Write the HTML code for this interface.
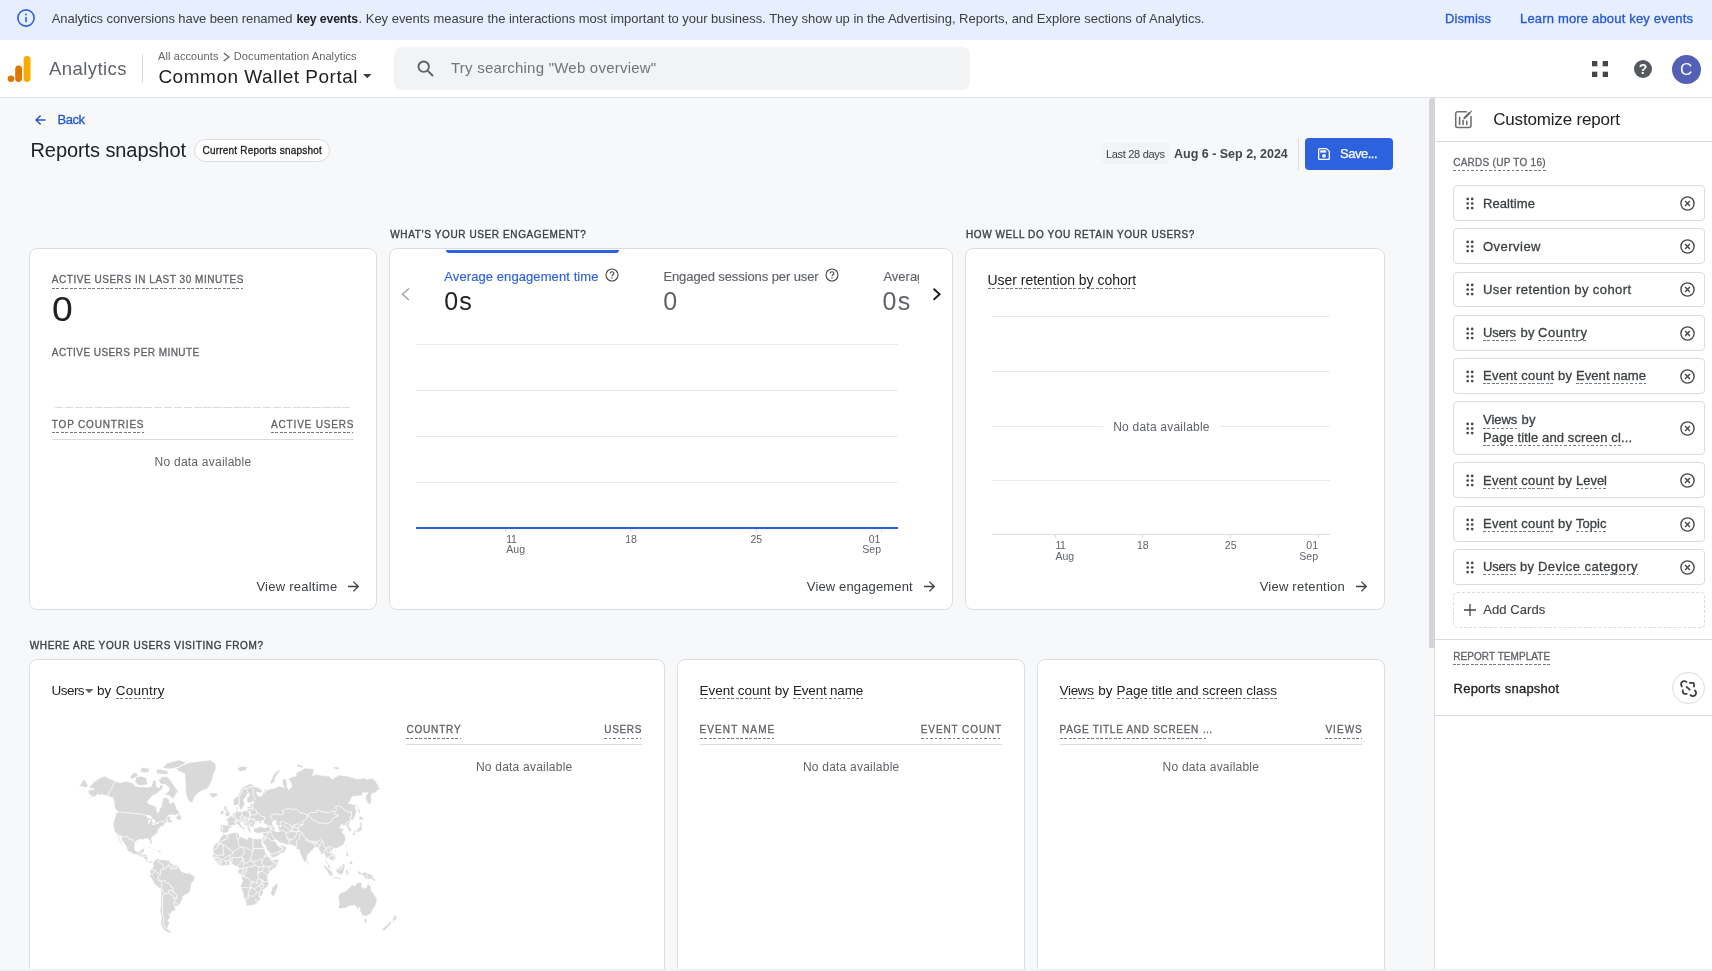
<!DOCTYPE html>
<html lang="en">
<head>
<meta charset="utf-8">
<title>Analytics | Reports snapshot</title>
<style>
*{box-sizing:border-box;margin:0;padding:0}
html,body{width:1712px;height:971px;overflow:hidden;background:#f7f8fa;font-family:"Liberation Sans",Arial,sans-serif;color:#202124}
.abs{position:absolute}
.t{position:absolute;white-space:nowrap;line-height:1}
.card{position:absolute;background:#fff;border:1px solid #dadce0;border-radius:8px}
.dash{position:absolute;height:1px;background:repeating-linear-gradient(90deg,currentColor 0,currentColor 2.7px,transparent 2.7px,transparent 4.5px)}
svg{position:absolute;overflow:visible}
</style>
</head>
<body>
<div id="root" style="position:absolute;left:0;top:0;width:1712px;height:971px;overflow:hidden;will-change:transform">
<div class="abs" style="left:0;top:0;width:1712px;height:40px;background:#e7eefd"></div>
<svg style="left:16px;top:8px" width="20" height="20" viewBox="0 0 20 20"><circle cx="10" cy="10" r="8.1" fill="none" stroke="#2c62de" stroke-width="1.6"/><rect x="9.2" y="9" width="1.6" height="5.2" fill="#2c62de"/><circle cx="10" cy="6.4" r="1" fill="#2c62de"/></svg>
<div class="t" style="left:51.8px;top:12.0px;font-size:13px;color:#3c4043;letter-spacing:-0.093px;">Analytics conversions have been renamed</div>
<div class="t" style="left:296.5px;top:13.0px;font-size:12.3px;color:#202124;letter-spacing:-0.157px;font-weight:bold;">key events</div>
<div class="t" style="left:358.6px;top:12.0px;font-size:13px;color:#3c4043;letter-spacing:-0.025px;">. Key events measure the interactions most important to your business. They show up in the Advertising, Reports, and Explore sections of Analytics.</div>
<div class="t" style="left:1445.0px;top:12.0px;font-size:13px;color:#2557d0;letter-spacing:0.084px;-webkit-text-stroke:0.3px #2557d0;">Dismiss</div>
<div class="t" style="left:1520.0px;top:12.0px;font-size:13px;color:#2557d0;letter-spacing:0.178px;-webkit-text-stroke:0.3px #2557d0;">Learn more about key events</div>
<div class="abs" style="left:0;top:40px;width:1712px;height:58px;background:#fff;border-bottom:1px solid #e1e3e6"></div>
<svg style="left:6px;top:54px" width="28" height="30" viewBox="0 0 28 30">
<circle cx="5" cy="24.7" r="3.3" fill="#e37400"/>
<rect x="9.2" y="11.5" width="6.8" height="16.5" rx="3.4" fill="#e37400"/>
<rect x="17.6" y="2" width="6.9" height="26" rx="3.4" fill="#f9ab00"/>
</svg>
<div class="t" style="left:49.0px;top:60.0px;font-size:18.5px;color:#5f6368;letter-spacing:0.434px;">Analytics</div>
<div class="abs" style="left:142.0px;top:54.0px;width:1px;height:29.0px;background:#dadce0"></div>
<div class="t" style="left:158.0px;top:51.0px;font-size:11px;color:#5f6368;letter-spacing:0.099px;">All accounts</div>
<svg style="left:222px;top:52px" width="10" height="10" viewBox="0 0 10 10"><path d="M1.8 1 L7 5 L1.8 9" fill="none" stroke="#5f6368" stroke-width="1.2"/></svg>
<div class="t" style="left:233.8px;top:51.0px;font-size:11px;color:#5f6368;letter-spacing:0.106px;">Documentation Analytics</div>
<div class="t" style="left:158.4px;top:67.0px;font-size:19px;color:#202124;letter-spacing:0.513px;">Common Wallet Portal</div>
<svg style="left:363px;top:74px" width="9" height="5" viewBox="0 0 9 5"><path d="M0 0H8.6L4.3 4.3Z" fill="#3c4043"/></svg>
<div class="abs" style="left:393.6px;top:47px;width:576px;height:43px;border-radius:8px;background:#f1f3f4"></div>
<svg style="left:416px;top:59px" width="20" height="20" viewBox="0 0 20 20"><circle cx="7.7" cy="7.7" r="5.2" fill="none" stroke="#5f6368" stroke-width="1.9"/><path d="M11.6 11.6 L17 17" stroke="#5f6368" stroke-width="2"/></svg>
<div class="t" style="left:451.0px;top:60.0px;font-size:15px;color:#70757a;letter-spacing:0.227px;">Try searching "Web overview"</div>
<svg style="left:1592px;top:61px" width="16" height="16" viewBox="0 0 16 16"><rect x="0" y="0" width="5.3" height="5.3" fill="#444746"/><rect x="10.7" y="0" width="5.3" height="5.3" fill="#444746"/><rect x="0" y="10.7" width="5.3" height="5.3" fill="#444746"/><rect x="10.7" y="10.7" width="5.3" height="5.3" fill="#444746"/></svg>
<div class="abs" style="left:1634px;top:60px;width:18px;height:18px;border-radius:50%;background:#55585d"></div>
<div class="t" style="left:1638.7px;top:62.0px;font-size:14px;color:#fff;font-weight:bold;">?</div>
<div class="abs" style="left:1671.5px;top:54.5px;width:29px;height:29px;border-radius:50%;background:#5460b5"></div>
<div class="t" style="left:1679.9px;top:61.0px;font-size:17px;color:#fff;">C</div>
<svg style="left:34.8px;top:114px" width="12" height="12" viewBox="0 0 12 12"><path d="M10.6 6H1.2M5.6 1.4L1 6L5.6 10.6" fill="none" stroke="#2456cd" stroke-width="1.4"/></svg>
<div class="t" style="left:57.5px;top:113.0px;font-size:13px;color:#2456cd;letter-spacing:-0.467px;-webkit-text-stroke:0.3px #2456cd;">Back</div>
<div class="t" style="left:30.5px;top:140.0px;font-size:20px;color:#202124;letter-spacing:-0.084px;">Reports snapshot</div>
<div class="abs" style="left:194px;top:138.5px;width:136px;height:23px;border:1px solid #dadce0;border-radius:12px;background:#fff"></div>
<div class="t" style="left:202.5px;top:146.0px;font-size:10px;color:#202124;letter-spacing:0.209px;-webkit-text-stroke:0.3px #202124;">Current Reports snapshot</div>
<div class="abs" style="left:1102px;top:143px;width:66.5px;height:21px;border-radius:3px;background:#f1f3f4"></div>
<div class="t" style="left:1106.0px;top:149.0px;font-size:11px;color:#3c4043;letter-spacing:-0.307px;">Last 28 days</div>
<div class="t" style="left:1174.0px;top:148.0px;font-size:12.5px;color:#44474a;letter-spacing:-0.007px;font-weight:bold;">Aug 6 - Sep 2, 2024</div>
<div class="abs" style="left:1297.5px;top:138.0px;width:1px;height:31.5px;background:#dadce0"></div>
<div class="abs" style="left:1305px;top:137.5px;width:87.7px;height:32.5px;border-radius:4px;background:#2c62de"></div>
<svg style="left:1318px;top:148px" width="12" height="12" viewBox="0 0 12 12"><path d="M1.6 0.65H8.6L11.35 3.4V10.4A0.95 0.95 0 0 1 10.4 11.35H1.6A0.95 0.95 0 0 1 0.65 10.4V1.6A0.95 0.95 0 0 1 1.6 0.65Z" fill="none" stroke="#fff" stroke-width="1.3"/><rect x="2.2" y="2.3" width="6" height="2.3" fill="#fff"/><circle cx="6" cy="7.8" r="1.9" fill="#fff"/></svg>
<div class="t" style="left:1340.0px;top:147.0px;font-size:13px;color:#fff;letter-spacing:-0.494px;-webkit-text-stroke:0.25px #fff;">Save...</div>
<div class="t" style="left:390.3px;top:230.0px;font-size:10px;color:#3c4043;letter-spacing:0.610px;-webkit-text-stroke:0.35px #3c4043;">WHAT’S YOUR USER ENGAGEMENT?</div>
<div class="t" style="left:966.0px;top:230.0px;font-size:10px;color:#3c4043;letter-spacing:0.585px;-webkit-text-stroke:0.35px #3c4043;">HOW WELL DO YOU RETAIN YOUR USERS?</div>
<div class="t" style="left:29.8px;top:641.0px;font-size:10px;color:#3c4043;letter-spacing:0.621px;-webkit-text-stroke:0.35px #3c4043;">WHERE ARE YOUR USERS VISITING FROM?</div>
<div class="card" style="left:29px;top:248px;width:348px;height:362px;"></div>
<div class="t" style="left:51.8px;top:275.0px;font-size:10px;color:#5f6368;letter-spacing:0.537px;-webkit-text-stroke:0.3px #5f6368;">ACTIVE USERS IN LAST 30 MINUTES</div>
<div class="dash" style="left:51.8px;top:288.0px;width:191.7px;color:#747980"></div>
<div class="t" style="left:52.0px;top:292.0px;font-size:34.5px;color:#202124;transform:scaleX(1.08);transform-origin:0 0;">0</div>
<div class="t" style="left:51.8px;top:348.0px;font-size:10px;color:#5f6368;letter-spacing:0.436px;-webkit-text-stroke:0.3px #5f6368;">ACTIVE USERS PER MINUTE</div>
<div class="abs" style="left:55px;top:406.5px;width:296px;height:1px;background:repeating-linear-gradient(90deg,#dadce0 0,#dadce0 8.4px,transparent 8.4px,transparent 9.9px)"></div>
<div class="t" style="left:51.8px;top:420.0px;font-size:10px;color:#5f6368;letter-spacing:0.823px;-webkit-text-stroke:0.3px #5f6368;">TOP COUNTRIES</div>
<div class="dash" style="left:51.8px;top:432.0px;width:92.1px;color:#747980"></div>
<div class="t" style="left:271.1px;top:420.0px;font-size:10px;color:#5f6368;letter-spacing:0.814px;-webkit-text-stroke:0.3px #5f6368;">ACTIVE USERS</div>
<div class="dash" style="left:271.0px;top:432.0px;width:82.4px;color:#747980"></div>
<div class="abs" style="left:51.8px;top:439.2px;width:301.9px;height:1px;background:#dadce0"></div>
<div class="t" style="left:154.6px;top:456.0px;font-size:12px;color:#5f6368;letter-spacing:0.236px;">No data available</div>
<div class="t" style="left:256.4px;top:580.0px;font-size:13px;color:#3c4043;letter-spacing:0.248px;">View realtime</div>
<svg style="left:347.6px;top:580.5px" width="11" height="11" viewBox="0 0 11 11"><path d="M0 5.5H10.2M5.4 0.6L10.3 5.5L5.4 10.4" fill="none" stroke="#3c4043" stroke-width="1.3"/></svg>
<div class="card" style="left:389px;top:248px;width:564px;height:362px;"></div>
<div class="abs" style="left:446px;top:249.5px;width:173px;height:3px;border-radius:0 0 3px 3px;background:#2c62de"></div>
<svg style="left:401px;top:288px" width="9" height="13" viewBox="0 0 9 13"><path d="M8 0.6L1.4 6.3L8 12" fill="none" stroke="#9aa0a6" stroke-width="1.3"/></svg>
<svg style="left:931.5px;top:288px" width="10" height="13" viewBox="0 0 10 13"><path d="M1.6 0.8L7.6 6.3L1.6 11.8" fill="none" stroke="#202124" stroke-width="2"/></svg>
<div class="t" style="left:444.3px;top:270.0px;font-size:13px;color:#2c62de;letter-spacing:0.087px;-webkit-text-stroke:0.15px #2c62de;">Average engagement time</div>
<svg style="left:604.9px;top:268.0px" width="14" height="14" viewBox="0 0 14 14"><circle cx="7" cy="7" r="6" fill="none" stroke="#444746" stroke-width="1.1"/><path d="M5.1 5.6C5.1 4.4 6 3.7 7 3.7C8.1 3.7 8.9 4.4 8.9 5.4C8.9 6.7 7 6.9 7 8.3" fill="none" stroke="#444746" stroke-width="1.1"/><circle cx="7" cy="10" r="0.75" fill="#444746"/></svg>
<div class="t" style="left:444.2px;top:289.0px;font-size:25px;color:#202124;letter-spacing:1.196px;">0s</div>
<div class="t" style="left:663.4px;top:270.0px;font-size:13px;color:#5f6368;letter-spacing:-0.093px;-webkit-text-stroke:0.15px #5f6368;">Engaged sessions per user</div>
<svg style="left:824.5px;top:268.0px" width="14" height="14" viewBox="0 0 14 14"><circle cx="7" cy="7" r="6" fill="none" stroke="#444746" stroke-width="1.1"/><path d="M5.1 5.6C5.1 4.4 6 3.7 7 3.7C8.1 3.7 8.9 4.4 8.9 5.4C8.9 6.7 7 6.9 7 8.3" fill="none" stroke="#444746" stroke-width="1.1"/><circle cx="7" cy="10" r="0.75" fill="#444746"/></svg>
<div class="t" style="left:663.2px;top:289.0px;font-size:25px;color:#5f6368;">0</div>
<div class="abs" style="left:883.4px;top:265px;width:35.6px;height:50px;overflow:hidden"><div class="t" style="left:0.0px;top:5.0px;font-size:13px;color:#5f6368;-webkit-text-stroke:0.15px #5f6368;">Average</div>
<div class="t" style="left:-0.8px;top:24.0px;font-size:25px;color:#5f6368;letter-spacing:1.196px;">0s</div>
</div>
<div class="abs" style="left:416.3px;top:343.5px;width:481.7px;height:1px;background:#e8eaed"></div>
<div class="abs" style="left:416.3px;top:389.7px;width:481.7px;height:1px;background:#e8eaed"></div>
<div class="abs" style="left:416.3px;top:435.8px;width:481.7px;height:1px;background:#e8eaed"></div>
<div class="abs" style="left:416.3px;top:481.7px;width:481.7px;height:1px;background:#e8eaed"></div>
<div class="abs" style="left:416.3px;top:526.5px;width:482.0px;height:2px;background:#2c62de"></div>
<div class="abs" style="left:505.0px;top:528.5px;width:1px;height:3.5px;background:#dadce0"></div>
<div class="abs" style="left:629.8px;top:528.5px;width:1px;height:3.5px;background:#dadce0"></div>
<div class="abs" style="left:755.5px;top:528.5px;width:1px;height:3.5px;background:#dadce0"></div>
<div class="abs" style="left:881.2px;top:528.5px;width:1px;height:3.5px;background:#dadce0"></div>
<div class="t" style="left:506.3px;top:534.0px;font-size:10.5px;color:#5f6368;letter-spacing:-0.400px;">11</div>
<div class="t" style="left:506.3px;top:544.0px;font-size:10.5px;color:#5f6368;">Aug</div>
<div class="t" style="left:625.2px;top:534.0px;font-size:10.5px;color:#5f6368;">18</div>
<div class="t" style="left:750.4px;top:534.0px;font-size:10.5px;color:#5f6368;">25</div>
<div class="t" style="left:868.7px;top:534.0px;font-size:10.5px;color:#5f6368;">01</div>
<div class="t" style="left:862.3px;top:544.0px;font-size:10.5px;color:#5f6368;">Sep</div>
<div class="t" style="left:806.8px;top:580.0px;font-size:13px;color:#3c4043;letter-spacing:0.145px;">View engagement</div>
<svg style="left:923.7px;top:580.5px" width="11" height="11" viewBox="0 0 11 11"><path d="M0 5.5H10.2M5.4 0.6L10.3 5.5L5.4 10.4" fill="none" stroke="#3c4043" stroke-width="1.3"/></svg>
<div class="card" style="left:965px;top:248px;width:420px;height:362px;"></div>
<div class="t" style="left:987.5px;top:273.0px;font-size:14px;color:#202124;letter-spacing:-0.031px;">User retention by cohort</div>
<div class="dash" style="left:987.5px;top:288.0px;width:148.7px;color:#747980"></div>
<div class="abs" style="left:991.6px;top:316.0px;width:338.2px;height:1px;background:#e8eaed"></div>
<div class="abs" style="left:991.6px;top:370.8px;width:338.2px;height:1px;background:#e8eaed"></div>
<div class="abs" style="left:991.6px;top:425.5px;width:338.2px;height:1px;background:#e8eaed"></div>
<div class="abs" style="left:991.6px;top:480.0px;width:338.2px;height:1px;background:#e8eaed"></div>
<div class="abs" style="left:991.6px;top:534.0px;width:338.2px;height:1px;background:#dadce0"></div>
<div class="abs" style="left:1103px;top:418px;width:115.5px;height:16px;background:#fff"></div>
<div class="t" style="left:1113.2px;top:421.0px;font-size:12px;color:#5f6368;letter-spacing:0.223px;">No data available</div>
<div class="abs" style="left:1055.2px;top:534.0px;width:1px;height:4.0px;background:#dadce0"></div>
<div class="abs" style="left:1142.2px;top:534.0px;width:1px;height:4.0px;background:#dadce0"></div>
<div class="abs" style="left:1230.3px;top:534.0px;width:1px;height:4.0px;background:#dadce0"></div>
<div class="abs" style="left:1317.6px;top:534.0px;width:1px;height:4.0px;background:#dadce0"></div>
<div class="t" style="left:1055.4px;top:540.0px;font-size:10.5px;color:#5f6368;letter-spacing:-0.400px;">11</div>
<div class="t" style="left:1055.4px;top:551.0px;font-size:10.5px;color:#5f6368;">Aug</div>
<div class="t" style="left:1137.0px;top:540.0px;font-size:10.5px;color:#5f6368;">18</div>
<div class="t" style="left:1224.8px;top:540.0px;font-size:10.5px;color:#5f6368;">25</div>
<div class="t" style="left:1306.3px;top:540.0px;font-size:10.5px;color:#5f6368;">01</div>
<div class="t" style="left:1299.3px;top:551.0px;font-size:10.5px;color:#5f6368;">Sep</div>
<div class="t" style="left:1259.7px;top:580.0px;font-size:13px;color:#3c4043;letter-spacing:0.225px;">View retention</div>
<svg style="left:1355.8px;top:580.5px" width="11" height="11" viewBox="0 0 11 11"><path d="M0 5.5H10.2M5.4 0.6L10.3 5.5L5.4 10.4" fill="none" stroke="#3c4043" stroke-width="1.3"/></svg>
<div class="card" style="left:29px;top:659px;width:636px;height:331px;"></div>
<div class="t" style="left:51.5px;top:684.0px;font-size:13.5px;color:#202124;letter-spacing:-0.538px;">Users</div>
<svg style="left:85.2px;top:688.8px" width="9" height="5" viewBox="0 0 9 5"><path d="M0 0H8.4L4.2 4.2Z" fill="#5f6368"/></svg>
<div class="t" style="left:96.9px;top:684.0px;font-size:13.5px;color:#202124;letter-spacing:0.042px;">by</div>
<div class="t" style="left:115.7px;top:684.0px;font-size:13.5px;color:#202124;letter-spacing:0.238px;">Country</div>
<div class="dash" style="left:115.7px;top:698.0px;width:48.7px;color:#747980"></div>
<div class="t" style="left:406.4px;top:725.0px;font-size:10px;color:#5f6368;letter-spacing:0.826px;-webkit-text-stroke:0.3px #5f6368;">COUNTRY</div>
<div class="dash" style="left:406.4px;top:738.0px;width:54.4px;color:#747980"></div>
<div class="t" style="left:604.3px;top:725.0px;font-size:10px;color:#5f6368;letter-spacing:0.637px;-webkit-text-stroke:0.3px #5f6368;">USERS</div>
<div class="dash" style="left:604.3px;top:738.0px;width:37.0px;color:#747980"></div>
<div class="abs" style="left:406.4px;top:743.5px;width:235.6px;height:1px;background:#dadce0"></div>
<div class="t" style="left:475.9px;top:761.0px;font-size:12px;color:#5f6368;letter-spacing:0.223px;">No data available</div>
<svg style="left:70px;top:759px;overflow:hidden" width="330" height="185" viewBox="0 0 330 185">
<path fill="#d9d9d9" stroke="#fff" stroke-width="0.6" stroke-linejoin="round" d="M19.5 27.6L24.5 22.5L30.3 18.8L34.9 17.1L39.1 19.4L45.4 22.1L49.8 23.8L56.1 22.3L62.2 23.9L65.4 27.2L71.2 27.7L77.7 28.2L81.2 27.4L83.5 21.5L86.2 20.6L86.2 27.2L88.8 28.9L90.5 26.1L93.0 25.8L92.6 30.0L88.8 32.6L86.4 35.0L83.5 35.9L79.7 39.7L77.5 42.7L78.7 45.1L82.5 46.1L87.0 48.5L86.6 51.3L87.4 53.5L88.8 53.4L89.5 49.4L92.2 46.9L91.4 43.8L92.7 42.0L93.1 38.5L96.5 38.9L99.5 41.0L99.3 43.8L101.9 44.3L103.6 42.2L105.5 46.3L106.8 49.9L109.6 53.4L108.9 54.7L105.5 56.2L99.6 55.8L96.9 58.0L99.8 57.2L101.2 57.8L100.3 59.1L100.4 61.2L103.0 62.0L104.4 61.7L103.4 62.6L100.4 63.6L98.4 64.5L98.6 63.1L97.8 62.7L94.7 64.2L93.8 65.4L94.3 66.7L90.3 67.9L88.3 71.0L87.3 74.4L85.2 75.8L82.2 77.9L81.4 79.7L82.2 83.8L81.6 85.6L80.5 84.8L79.8 82.5L78.8 80.2L77.0 79.8L74.1 79.8L73.4 80.9L72.0 80.8L69.1 80.3L66.0 82.3L65.3 84.6L64.4 88.3L65.5 91.8L67.1 93.0L69.7 92.6L71.0 91.4L71.5 90.0L74.8 89.5L74.0 92.7L73.1 95.4L75.3 95.5L77.9 96.4L77.2 100.5L78.3 102.4L81.3 102.1L83.3 103.0L85.2 100.8L88.7 99.4L89.2 100.8L92.6 100.6L96.5 101.1L98.6 100.9L100.3 103.1L103.2 105.6L108.1 106.6L110.0 110.5L111.5 112.5L115.4 114.0L119.8 114.2L122.8 116.2L124.7 117.4L124.9 119.9L122.9 122.8L121.0 125.4L121.1 128.9L119.6 133.0L118.5 134.6L115.7 135.4L112.5 137.8L112.5 140.5L109.7 144.9L108.5 147.0L105.8 147.6L103.9 146.8L105.5 149.6L105.0 151.6L101.2 152.7L101.1 155.1L98.8 155.2L100.2 157.2L99.4 160.2L97.6 161.6L99.6 163.9L97.8 167.4L98.0 169.9L98.9 170.9L101.9 173.2L99.3 174.0L96.4 172.4L93.0 170.0L91.0 165.4L91.3 160.7L91.0 155.6L89.9 151.3L91.1 145.4L90.7 140.9L91.2 135.4L90.8 129.9L88.5 128.4L84.7 125.3L82.8 121.9L80.9 118.4L79.5 116.9L80.1 114.9L80.6 114.0L79.6 112.5L80.6 110.7L81.8 110.0L83.3 107.6L83.1 104.8L82.2 103.1L80.7 104.3L79.3 103.6L77.8 103.3L75.2 101.5L73.5 98.5L69.8 97.4L67.0 95.1L64.6 95.4L61.7 94.2L57.6 91.7L56.7 89.2L56.1 87.0L53.7 84.1L51.3 79.9L51.2 77.7L49.6 77.1L49.5 79.2L50.9 82.3L52.4 85.8L52.7 87.6L51.0 85.2L49.1 81.8L48.3 78.8L47.5 76.1L46.5 74.1L44.7 73.3L43.7 69.8L43.2 66.2L43.5 63.1L45.5 57.1L45.9 53.7L47.4 54.0L47.7 52.9L46.5 50.9L44.7 48.9L44.2 45.1L43.5 42.8L42.7 39.9L40.4 38.7L38.3 37.3L35.0 36.6L31.8 35.6L28.0 36.6L28.6 34.8L25.4 37.3L20.9 38.7L16.1 40.2L13.7 40.4L19.0 38.8L22.4 36.6L18.7 35.7L19.4 34.6L17.5 32.6L20.3 31.0L23.3 30.7L24.3 29.7L21.2 29.6L20.1 28.9Z M105.9 9.3L111.5 6.7L119.6 3.4L130.3 2.2L140.4 1.0L145.6 5.0L146.1 9.1L143.9 14.4L141.7 22.1L139.9 26.1L137.2 29.9L132.2 31.6L127.7 34.5L124.8 37.4L122.4 43.2L120.7 43.4L118.3 41.8L116.5 37.1L115.3 32.0L115.7 26.4L115.1 20.2L114.8 14.5L109.2 12.5L106.9 10.4Z M96.7 17.6L99.3 19.8L103.0 24.8L105.0 27.9L108.2 32.3L105.9 35.1L104.1 39.4L101.6 38.8L98.8 36.4L93.9 35.4L98.0 33.0L99.8 29.5L95.6 25.4L90.7 25.1L88.5 20.8L92.7 17.8Z M64.9 23.1L68.2 26.3L74.0 26.3L77.5 25.2L76.2 18.8L71.2 17.2L66.0 17.8Z M60.1 18.4L62.6 20.2L68.2 16.4L66.4 13.6L63.0 14.0Z M86.0 14.3L89.6 15.0L97.3 15.6L98.5 12.3L91.5 10.5L87.0 10.1Z M69.5 12.2L74.2 13.9L78.6 13.1L79.6 9.4L72.2 8.6Z M92.1 9.2L100.9 9.9L108.9 8.2L116.3 3.3L108.7 0.9L96.8 4.2Z M105.5 59.5L108.7 60.9L111.0 61.1L111.5 58.8L109.8 54.7L108.0 55.9Z M76.8 89.2L79.8 87.9L84.5 90.2L87.1 91.1L83.9 91.5L83.0 89.9L79.7 89.1Z M86.8 92.9L88.7 91.4L92.5 92.9L89.6 93.6Z M153.5 74.9L157.1 75.7L161.8 73.8L166.5 73.7L168.3 73.2L169.3 75.8L168.7 76.9L169.9 77.8L173.2 78.6L176.6 80.6L178.0 79.6L177.9 78.1L180.8 78.3L182.7 79.4L186.5 80.1L188.4 79.5L189.7 79.8L191.5 79.6L192.3 81.6L191.6 84.3L193.2 87.4L194.8 90.5L195.3 93.1L196.5 94.6L197.4 96.3L199.5 98.3L201.1 99.1L201.3 100.1L202.5 101.2L204.9 100.5L209.0 99.7L208.6 101.6L207.0 105.6L205.5 108.6L202.1 110.5L199.7 113.2L198.2 115.4L197.2 117.9L197.6 120.4L198.6 121.9L198.5 125.9L196.9 128.2L194.4 129.9L192.8 131.2L193.3 133.5L193.0 135.6L190.5 137.7L190.4 140.3L188.5 141.9L186.0 144.9L183.2 146.2L179.7 146.4L177.8 147.1L176.2 146.4L176.2 144.0L175.5 141.8L174.3 139.7L173.4 137.6L173.0 133.9L171.1 129.8L170.5 127.8L171.7 123.8L172.5 121.8L171.0 117.4L170.6 115.9L168.3 114.0L167.8 112.3L168.3 110.0L168.5 108.1L167.6 107.1L165.9 107.2L164.4 106.6L163.4 105.3L160.5 105.5L157.0 106.8L154.6 106.4L151.7 107.2L149.7 106.1L147.7 104.8L146.0 103.1L145.5 101.9L144.4 100.7L142.7 99.2L142.0 97.0L143.0 95.4L143.3 92.7L142.6 90.6L143.6 87.8L145.1 85.1L146.6 83.6L148.2 82.5L149.7 81.4L149.8 79.6L151.0 77.7L152.6 76.8Z M207.1 123.4L208.0 126.9L207.0 129.5L204.7 136.5L202.4 137.2L201.1 135.1L200.8 133.0L201.9 131.3L201.7 128.4L204.2 127.1L205.8 124.9Z M150.6 73.5L150.2 71.6L150.9 68.4L150.6 66.5L151.7 65.8L155.8 66.0L157.4 66.2L157.9 63.0L156.7 61.4L154.8 60.1L157.5 59.8L157.7 58.4L159.2 58.5L160.4 57.0L162.1 56.2L163.1 54.0L165.1 53.4L166.6 52.8L166.1 50.6L166.1 48.5L168.0 47.5L167.9 49.9L167.5 51.3L168.6 52.7L171.2 52.6L175.1 51.6L176.2 52.0L177.2 50.9L177.1 48.3L178.3 47.3L179.8 48.0L180.0 46.4L179.1 45.1L182.0 44.6L184.5 43.8L183.2 42.9L180.2 43.6L178.1 43.9L177.0 42.4L177.0 39.3L179.3 36.4L179.8 35.2L177.2 34.7L176.8 36.9L173.7 40.5L173.6 42.5L175.0 44.0L173.3 47.7L172.6 49.6L171.4 50.6L170.1 50.6L169.8 49.2L168.6 45.9L168.0 45.1L166.0 46.8L164.1 46.3L163.2 44.1L163.2 41.0L165.7 38.6L168.1 37.0L169.6 33.6L171.1 30.5L173.4 28.1L176.6 26.5L179.4 24.9L181.2 25.1L183.7 26.4L183.0 27.6L185.5 28.1L187.9 28.4L191.8 30.9L192.6 33.2L190.2 33.8L186.4 33.0L187.5 35.9L189.4 37.5L190.6 37.0L192.6 36.4L191.9 34.1L194.7 33.5L194.5 29.7L196.6 30.4L196.6 32.4L198.6 30.3L202.2 29.6L206.6 28.5L207.6 26.8L210.9 27.4L214.0 28.9L212.4 23.9L212.7 19.7L215.9 20.0L217.0 23.7L217.3 28.6L219.4 31.3L219.3 28.5L221.8 28.9L220.9 23.1L218.1 20.5L221.4 18.1L226.3 17.1L225.7 14.3L230.8 11.4L235.2 9.0L244.2 10.1L242.5 16.4L246.9 15.5L252.3 16.6L259.0 17.1L262.3 20.1L264.7 18.8L269.1 16.0L277.9 17.3L287.5 20.1L295.2 18.9L296.8 20.5L301.9 19.2L304.0 20.0L309.0 27.7L308.2 28.5L311.0 30.0L307.4 31.3L305.8 33.6L302.6 34.2L301.1 36.4L301.1 38.7L301.5 40.6L301.2 42.7L300.7 44.6L299.9 46.0L297.0 43.0L295.3 39.4L295.7 37.7L296.8 35.5L298.4 32.6L296.3 34.0L292.8 33.6L292.5 36.0L290.6 36.9L286.9 36.9L282.6 37.6L280.9 40.1L279.7 43.4L278.0 44.1L280.8 44.9L284.3 45.5L285.2 46.4L285.4 48.7L286.4 52.1L285.7 55.5L284.2 59.3L282.4 61.2L281.1 60.8L280.4 62.2L279.8 63.5L279.0 65.6L278.4 66.3L279.7 67.6L281.0 69.6L281.4 71.6L280.0 72.8L278.8 73.1L278.4 70.1L277.6 68.9L276.4 67.9L276.3 66.4L275.2 65.9L272.9 67.4L272.9 65.4L271.8 65.0L270.5 67.3L269.5 68.3L271.0 69.8L273.3 69.3L274.5 69.8L273.0 71.0L272.0 72.8L273.5 74.7L275.2 76.7L275.2 78.7L275.8 80.2L274.9 82.6L274.2 84.4L272.5 86.4L269.8 88.0L266.5 89.3L265.7 90.5L265.2 89.1L263.6 89.2L262.3 90.9L261.7 92.0L263.1 94.1L265.0 96.0L265.8 98.6L265.5 99.9L263.6 101.0L261.9 102.7L261.5 101.5L259.6 100.5L259.1 99.2L257.6 98.7L257.0 97.9L256.7 99.4L256.0 101.0L256.8 103.0L258.1 104.7L259.4 106.1L260.3 107.5L261.1 110.0L260.4 110.2L258.5 108.8L257.3 106.1L256.2 104.0L255.2 103.2L255.4 101.0L255.3 98.9L254.2 95.8L253.4 94.2L252.0 95.3L250.8 95.1L250.5 92.7L248.4 90.0L247.7 88.4L246.4 88.2L245.1 89.2L243.2 89.7L242.9 91.1L241.4 91.7L239.0 94.7L237.2 95.9L237.2 98.0L237.0 100.5L236.2 102.3L234.8 103.5L233.6 101.8L232.2 99.0L231.1 96.5L229.9 93.4L229.5 90.8L227.2 90.5L225.7 88.9L226.6 88.1L224.7 87.4L223.5 86.2L221.0 85.9L218.1 85.9L214.7 85.5L213.6 84.2L212.9 83.9L211.3 84.5L209.3 83.5L207.5 81.9L206.6 80.9L205.4 80.5L204.7 81.2L205.3 82.6L206.9 84.4L207.2 85.5L208.1 86.7L208.5 85.3L208.5 86.9L211.0 87.1L212.8 85.1L213.4 86.7L215.4 87.5L216.7 88.8L215.6 91.0L214.9 92.5L212.6 94.0L209.6 95.6L206.5 97.6L202.9 98.8L201.4 98.9L200.6 96.6L199.8 94.1L196.9 90.5L196.1 87.9L194.3 85.3L192.4 83.2L192.3 81.6L191.6 79.6L192.0 78.0L192.7 76.1L192.8 74.4L192.5 73.6L190.9 74.1L189.0 74.3L187.6 74.3L186.2 73.8L184.7 73.6L183.5 71.7L183.9 70.5L183.3 70.0L185.8 68.7L188.1 68.5L189.9 67.5L191.4 67.4L192.7 68.4L194.6 68.7L197.3 67.9L197.3 66.7L195.2 65.3L193.2 64.1L193.9 62.5L192.9 61.5L190.9 62.2L192.2 63.4L191.4 64.2L189.6 64.5L188.5 63.3L189.4 62.6L187.5 62.0L186.5 62.9L186.0 63.7L185.2 65.2L184.6 66.6L185.0 68.2L183.5 69.0L181.2 69.1L180.8 69.9L180.0 69.5L180.4 70.9L181.4 72.2L180.5 72.5L180.7 74.0L179.3 73.7L178.8 72.1L177.0 69.7L177.0 67.9L176.0 67.1L173.6 66.0L172.5 64.2L171.5 63.4L170.3 63.8L170.3 65.1L171.4 66.0L172.1 67.4L173.7 68.0L176.0 69.8L176.1 70.2L174.7 69.5L174.4 70.4L174.9 71.2L174.1 72.4L173.6 72.4L173.8 70.7L173.4 70.0L172.2 69.3L170.5 68.2L169.1 67.2L168.4 65.9L167.0 64.9L165.9 65.7L164.5 66.5L163.1 66.2L161.9 66.6L161.9 67.9L159.7 69.2L158.7 70.7L159.2 71.6L158.3 72.8L157.1 73.8L154.9 73.9L153.8 74.6L153.1 73.8L152.1 73.3Z M154.1 57.8L155.9 57.6L159.0 57.0L160.2 56.3L159.4 55.9L160.5 54.5L159.2 54.1L158.8 52.0L157.6 50.6L157.3 49.9L156.2 49.9L157.3 47.7L155.6 47.7L156.3 46.2L154.7 46.2L153.7 48.8L154.2 50.8L154.8 51.6L156.2 51.5L156.4 53.4L155.1 53.6L155.3 55.0L154.4 55.6L156.2 56.2L155.2 56.7Z M150.2 55.9L153.5 55.1L153.8 53.4L154.1 51.9L152.8 50.9L151.6 52.0L150.3 52.4L150.7 53.7Z M139.0 35.0L141.0 33.7L144.2 34.2L146.9 33.9L147.8 35.8L146.5 37.3L143.3 38.7L140.3 37.9L140.8 36.4Z M199.8 23.5L201.9 19.6L203.4 15.7L208.3 11.0L210.4 11.7L205.5 17.9L204.2 23.3L201.6 24.8Z M167.0 9.9L170.2 7.6L177.9 7.5L175.3 11.6L170.2 12.5Z M226.8 7.4L227.5 4.8L233.8 7.0L231.9 8.7Z M262.7 9.2L265.5 7.5L271.0 8.7L267.6 10.7Z M284.2 43.8L286.7 45.8L288.5 49.8L290.2 50.5L289.7 54.4L289.3 55.6L287.1 49.1L285.7 46.6Z M289.3 61.8L289.1 59.5L289.2 56.5L293.6 59.1L292.4 61.5L290.0 60.8Z M290.5 62.6L292.2 65.3L291.9 68.2L292.3 70.7L290.8 71.7L289.0 72.4L288.2 73.9L287.1 72.5L284.8 73.2L283.4 73.5L283.3 72.7L284.7 71.4L287.7 71.0L288.0 68.9L289.6 68.3L290.3 66.2L289.9 64.0Z M282.6 74.2L284.2 73.8L286.3 73.1L286.9 73.7L285.2 74.7L284.6 76.8L283.5 77.1L282.6 75.1Z M275.7 84.7L276.6 85.2L276.1 88.4L275.2 87.3Z M264.5 91.6L266.2 90.8L266.7 91.3L265.4 92.8Z M237.2 101.8L239.0 104.1L238.3 105.4L237.3 105.6L237.1 103.6Z M252.3 106.0L254.5 106.4L257.3 108.7L260.4 111.5L262.9 114.5L262.6 117.3L261.3 117.3L258.9 115.3L257.3 112.3L255.0 109.5Z M262.0 118.3L265.2 118.0L267.7 117.9L271.1 119.2L271.0 120.2L266.6 119.7L263.2 118.9Z M265.8 110.0L268.1 109.3L269.7 108.0L272.1 106.0L273.5 104.5L275.6 106.3L274.6 107.3L274.4 110.5L273.2 113.0L272.6 115.3L271.2 115.5L268.2 114.7L266.8 113.0L265.8 111.2Z M276.1 110.7L277.4 110.2L281.3 110.0L281.5 111.0L277.6 111.0L278.1 112.5L279.8 112.5L278.6 113.5L279.5 116.0L278.0 116.3L277.6 114.3L276.9 114.5L276.9 117.0L276.0 117.0L275.9 115.0L275.6 113.0Z M287.4 112.3L290.3 112.3L291.3 114.8L294.2 113.2L297.2 114.1L300.6 115.3L303.4 117.5L302.9 118.3L306.2 122.0L303.7 121.9L301.9 120.1L299.4 119.8L298.4 120.8L295.0 119.6L294.1 118.5L294.8 117.3L291.7 116.0L289.3 115.5L288.3 114.3Z M276.1 92.3L277.8 92.3L277.8 94.5L280.1 98.3L279.0 97.4L277.5 97.4L276.5 96.7L275.9 95.1Z M278.4 104.0L279.8 102.9L281.7 101.6L282.8 104.0L281.9 105.7L280.4 105.0Z M269.4 134.5L268.4 137.9L268.8 142.0L269.2 145.6L268.0 149.1L270.7 150.1L272.9 149.0L276.2 149.1L279.1 147.1L282.1 146.5L284.6 146.3L286.6 148.1L287.5 150.8L288.3 149.4L290.1 148.5L289.5 151.5L291.0 152.7L291.3 155.5L293.9 156.8L296.4 157.3L298.5 155.8L300.6 155.0L302.2 151.7L304.6 148.3L306.6 143.4L306.9 139.6L305.1 137.1L303.8 134.6L301.2 131.6L300.9 127.1L299.0 126.3L298.3 122.5L297.3 124.9L297.0 127.6L294.8 129.8L292.5 127.9L291.1 127.0L292.6 124.1L291.4 123.8L288.5 123.2L286.7 124.3L285.3 126.8L283.8 126.7L281.9 125.8L280.3 128.3L278.0 129.4L277.6 130.5L275.0 132.3L272.5 133.1Z M294.3 159.8L297.5 160.1L296.3 163.7L294.3 164.0L294.1 161.9Z M323.4 152.8L324.5 155.2L325.4 156.8L327.7 158.1L325.5 160.5L323.6 163.6L322.4 163.5L323.2 161.1L322.5 160.2L324.0 158.2L324.0 155.4Z M320.9 162.0L321.8 163.7L319.4 166.9L317.0 168.8L315.8 170.8L313.6 171.6L312.1 170.3L314.7 167.5L317.5 165.8L319.7 163.5Z M14.0 20.0L16.4 23.2L18.4 26.7L15.0 28.9L12.6 27.5L9.0 27.7Z"/>
<path fill="#fff" d="M203.4 61.8L205.6 61.0L207.3 63.3L205.6 64.0L207.6 66.4L207.5 67.4L209.2 69.9L209.4 72.5L206.8 73.2L204.8 72.3L204.8 69.5L202.7 66.2L201.7 64.1Z M76.0 56.0L79.7 56.3L82.1 57.9L82.1 59.7L79.8 59.6L77.1 59.0Z M78.8 60.5L80.5 60.6L81.6 60.7L79.6 63.6L78.4 65.9L77.9 64.2Z M82.0 60.4L84.7 60.6L85.7 62.5L83.7 64.3L82.3 63.1Z M81.9 65.7L86.2 64.8L88.8 64.2L88.3 63.5L85.7 64.1L83.8 65.0Z"/>
<path fill="none" stroke="#fff" stroke-width="0.8" stroke-linejoin="round" d="M45.4 22.1L37.7 36.6L40.0 38.5L42.6 38.0L43.1 41.5L45.1 43.0L44.5 44.6 M47.7 52.9L73.4 55.5L78.5 57.4L81.9 59.3L82.9 61.2L82.9 64.5L82.2 65.7L86.2 64.8L86.3 64.0L89.0 63.3L90.7 62.3L93.7 62.5L95.4 60.6L96.6 59.4L97.6 60.0L97.2 62.0L97.8 62.7 M47.5 76.1L49.7 76.2L53.1 77.8L55.8 77.9L55.9 77.3L57.5 77.3L59.0 80.2L60.4 80.8L62.0 79.9L63.5 82.6L65.3 84.5 M69.1 96.9L70.1 94.1L72.4 93.5L73.2 92.8 M72.4 93.5L72.0 97.0L73.4 98.1 M73.0 95.7L72.0 97.0 M73.4 98.5L75.4 97.6L77.9 96.5 M75.3 100.4L77.2 100.6 M77.9 103.5L78.2 102.1 M83.4 103.9L83.3 103.0 M89.4 99.8L87.8 102.6L90.5 104.6L92.9 105.4L93.1 108.7L93.4 110.3L96.3 109.5L96.3 107.4L99.3 107.1L99.6 106.4L98.9 105.6L100.5 103.3 M99.6 106.4L100.4 107.1L100.7 109.8L103.1 109.5L106.1 109.2L108.4 107.6 M103.0 105.7L103.1 109.5 M106.1 105.8L106.1 109.2 M93.4 110.3L90.9 110.5L90.5 115.6L87.5 113.9L85.2 111.6L83.1 110.8L81.8 110.1 M85.2 111.6L82.2 116.0L80.3 114.8 M90.5 115.6L87.6 118.7L88.4 121.4L90.0 120.9L90.0 122.4L91.1 122.4L95.2 121.2L95.6 123.4L100.0 125.2L100.6 127.7L102.3 127.8L103.2 129.6L102.7 131.7L99.1 131.2L98.5 133.9L96.9 134.6L94.3 134.5L92.7 132.2L91.5 129.1L90.7 129.9 M91.1 122.4L92.0 123.9L91.8 127.0L91.5 129.1 M102.7 131.7L103.2 133.8L105.2 134.0L106.7 135.7L106.6 137.4L105.6 139.4L102.9 139.2L103.6 137.3L101.2 135.8L98.5 133.9 M94.3 134.5L93.1 136.4L92.4 142.5L92.4 145.9L92.6 151.8L92.7 156.7L93.7 160.5L93.8 165.9L94.6 168.5L98.0 169.9L98.5 170.4 M108.5 146.3L104.1 142.5L105.7 140.4L107.4 138.6L106.6 137.4 M104.1 142.5L103.9 146.2 M150.9 67.9L153.0 68.0L152.5 70.7L152.1 73.3 M157.4 66.3L161.9 67.3 M161.2 56.7L162.7 58.0L164.3 58.0L166.3 59.2L165.7 61.0L164.4 62.8L165.3 63.2L165.9 65.7 M162.7 56.2L164.3 56.7L164.3 58.0 M165.1 53.6L164.3 56.7 M171.4 52.8L172.1 56.6L169.8 57.7L171.4 59.6L170.7 61.1L167.6 61.1L165.7 61.0 M166.5 51.4L167.5 51.6 M176.2 52.0L179.5 52.5L180.3 57.1L179.1 59.1L176.0 58.5L172.1 56.6 M171.4 59.6L174.2 59.4L176.0 58.5 M174.2 59.4L174.3 60.4L173.9 61.8L171.4 62.3L170.0 61.7L168.5 61.9L167.6 61.1 M164.4 62.8L166.7 63.0L168.5 61.9 M171.4 62.3L171.5 63.4 M173.9 61.8L176.2 63.0L178.0 62.6L179.5 60.3L179.1 59.1 M174.3 60.4L176.1 60.6L179.5 60.3 M171.5 63.6L173.1 63.8L173.5 62.6L173.9 61.8 M176.2 63.0L176.3 64.2L173.5 63.9L173.4 64.8L176.0 67.1 M176.3 64.2L176.8 65.9L177.8 66.7L177.0 67.9 M178.0 62.6L179.5 64.5L179.7 67.1L177.8 66.7 M179.5 64.5L183.7 65.2L185.2 65.5 M179.7 67.1L180.1 68.5L177.9 68.9L177.0 69.7 M180.1 68.5L183.2 68.0L184.8 67.6 M179.7 67.1L183.2 68.0 M179.5 60.3L182.8 59.9L184.6 63.3L186.0 63.7 M182.8 59.9L184.1 59.8L186.1 62.1 M180.3 57.1L179.8 55.8L180.2 55.1L179.5 52.5 M179.8 55.8L186.0 55.8L187.0 53.4 M179.5 52.5L181.5 51.2L183.4 49.3 M177.1 49.8L181.5 49.4L183.4 49.3 M179.9 47.0L182.6 47.5 M169.1 45.6L169.5 41.8L169.0 38.6L170.9 34.4L173.5 30.0L175.5 29.0L178.3 29.3L179.8 27.4L182.2 27.6 M175.5 29.0L178.5 34.3 M178.3 29.3L179.7 27.8 M182.2 27.6L182.0 29.8L183.3 31.6L183.5 36.8L185.4 39.5L182.6 43.1 M182.9 44.7L182.6 47.5L183.4 49.3L185.9 50.9L187.0 53.4L189.0 54.6L190.6 56.8L192.9 57.5L194.7 57.8L194.8 60.2L193.5 61.1 M195.7 65.6L199.5 66.5L201.9 67.4L203.7 67.4 M197.3 67.9L199.2 68.3L200.6 68.0L201.9 67.4 M199.2 68.3L200.6 70.0L202.3 70.9L204.5 71.4 M200.6 68.0L201.7 70.2 M203.4 61.8L201.3 59.7L200.9 57.0L204.2 54.9L207.9 55.4L211.5 55.5L213.7 55.1L212.4 51.4L215.7 50.3L219.0 49.0L221.1 50.3L223.4 50.5L226.2 49.8L230.4 54.2L233.4 53.7L235.8 55.4L237.5 55.8L241.2 53.4L246.8 53.4L246.4 51.2L250.5 51.8L250.7 52.8L255.2 53.0L258.7 53.9L261.4 52.1L264.1 52.4L265.2 52.7L266.6 51.1L265.5 48.1L268.2 46.9L270.9 47.5L273.9 50.9L277.5 52.4L280.0 53.4L281.6 52.6L281.6 58.0L279.6 58.3L280.6 61.1L280.3 62.0 M238.0 55.8L238.6 57.5L241.2 58.7L242.3 61.1L246.8 62.1L248.2 64.1L252.9 64.0L256.5 65.0L260.8 63.2L262.3 61.5L261.7 59.9L265.2 58.1L268.4 56.7L265.8 55.3L264.1 55.2L264.1 52.4 M237.5 55.8L236.7 59.0L234.4 61.5L232.4 62.0L233.2 65.6L230.2 67.3L227.8 68.6L227.7 69.3L229.2 71.9 M233.2 65.6L228.1 65.0L224.5 65.7L222.0 67.7L220.6 67.5L219.7 65.3L214.8 63.8L212.3 62.4L210.1 63.1L210.8 67.7L208.8 66.9L207.5 67.4 M224.5 65.7L224.5 68.2L227.7 69.3 M222.0 67.7L221.8 69.5L224.5 68.2 M221.8 69.5L222.8 72.5L226.1 72.6L229.2 71.9 M210.8 67.7L212.9 66.2L215.5 67.7L217.1 69.1L221.3 72.1L222.8 72.5 M221.3 72.1L219.6 73.2L216.2 73.2 M200.6 70.0L200.2 72.8L202.3 75.1L201.9 76.5L204.4 79.8L205.3 80.9 M209.4 72.5L212.5 71.4L215.6 73.2L216.2 73.2L216.2 76.2L217.0 79.0L218.6 81.3L219.6 83.7L218.2 85.9 M217.0 79.0L222.2 80.8L224.8 78.4L226.1 75.9L226.3 73.0L229.2 71.9 M218.6 81.3L222.2 80.8 M224.7 87.4L227.4 86.6L226.0 82.9L228.6 80.4L229.8 78.3L229.1 76.4L232.3 73.9L229.2 71.9 M232.3 73.9L234.0 77.4L236.3 80.0L239.4 81.5L243.3 82.4L244.4 83.1L247.2 82.5L250.8 80.6L252.3 81.9L254.0 84.6L253.2 86.6L255.0 88.6L257.0 89.5L257.8 88.2L260.7 87.2L263.6 89.2 M236.3 80.0L235.7 81.6L239.6 83.1L243.6 84.0L243.3 82.4 M243.7 84.0L245.4 84.5L247.8 85.6L250.2 85.9L249.2 88.9L248.4 90.0 M244.4 83.1L247.4 83.6L247.2 82.5 M243.7 84.0L244.6 86.2L245.1 89.2 M250.2 85.9L252.3 81.9 M257.0 89.5L256.1 90.6L254.1 91.3L254.0 93.7L255.5 96.8L255.5 101.0 M256.1 90.6L257.2 93.6L260.1 92.8L261.9 96.8L259.0 97.3L259.1 99.2 M257.0 89.5L257.8 88.2 M257.8 88.2L259.8 90.4L261.0 92.3L263.8 96.8L261.9 96.8 M263.8 96.8L264.0 99.1L262.4 100.5L261.1 101.1 M257.9 105.3L257.1 105.1 M275.2 65.9L276.7 63.4L278.2 62.8L280.3 62.0 M277.5 68.6L279.5 67.5 M183.2 68.0L184.8 67.6 M192.7 73.5L194.6 73.5L198.7 72.9L200.9 72.9 M192.7 76.0L193.4 76.4L192.8 77.5 M192.6 77.7L192.7 79.4L192.3 81.6 M192.8 77.5L195.7 77.3L197.6 76.1L198.7 72.9 M195.7 77.3L196.0 78.8L194.1 79.4L195.0 80.7L193.3 81.9L192.3 81.7 M196.0 78.8L198.9 79.7L201.6 81.8L203.4 81.9L204.6 82.5L205.2 82.5 M203.4 81.9L204.4 80.9L204.7 81.0 M200.8 95.1L204.7 94.6L209.4 92.5L212.3 91.4L212.8 89.4L209.7 88.4L208.7 87.0 M209.4 92.5L210.5 94.9 M212.8 89.4L212.3 88.6L212.9 87.2L213.1 86.3 M207.9 86.6L208.3 86.7 M157.1 75.7L157.9 78.9L150.7 82.6L150.7 84.1L146.6 83.7 M150.7 84.1L150.7 85.5L147.5 85.4L147.4 88.2L146.4 90.3L142.6 90.3 M167.0 73.7L166.8 76.3L166.1 77.1L167.5 79.1L168.0 80.9L168.6 84.7L168.1 85.1L170.6 88.1L164.6 92.2L162.1 92.5L160.2 90.8L154.4 86.5L150.7 84.1 M169.9 77.8L168.8 79.4L168.0 80.9 M182.7 79.4L183.1 89.6L194.6 89.5 M183.1 89.6L183.2 91.6L182.2 91.6L182.2 92.1L174.4 88.0L173.5 88.6L170.6 88.1 M154.4 86.5L152.8 86.5L153.7 96.2L147.8 96.2L147.1 97.0 M143.0 95.4L144.9 95.1L147.1 97.0L147.9 99.3L145.6 99.1L142.7 99.3 M142.6 98.1L145.4 98.1 M144.4 100.7L145.6 99.1 M146.0 102.7L148.7 101.7L148.9 103.2L147.7 104.7 M148.9 103.2L151.0 104.1 M162.1 92.5L163.1 94.9L159.2 96.7L158.5 96.7L156.3 97.9L153.9 99.9L151.0 101.2L150.7 99.7L147.9 99.3 M173.5 88.6L174.0 91.1L174.1 94.9L172.1 97.2L172.3 98.0L168.7 98.5L165.8 98.7L162.9 98.2L162.5 100.0 M159.2 96.7L161.2 99.7L162.5 100.0 M172.3 98.0L172.8 99.2L171.7 102.2L169.8 104.9L167.4 106.8 M172.8 99.2L174.1 101.7L172.7 101.9L174.2 104.1 M182.2 92.1L182.3 96.0L180.9 97.7L180.5 98.9L181.3 100.7L177.2 103.6L174.2 104.1L173.2 105.4L173.3 107.2L174.8 109.5 M181.3 100.7L182.5 102.9L185.9 102.1L187.8 101.7L190.9 99.7L192.2 102.1L191.3 103.6L193.3 106.1L194.3 107.1 M185.8 106.5L182.5 102.9 M196.5 93.6L194.5 97.4L194.2 99.0L192.3 100.8L192.2 102.1 M194.5 97.4L198.0 97.1L200.4 99.1L201.0 99.0 M201.0 100.1L200.8 100.8L202.0 102.6L205.9 103.6L203.1 106.6L200.1 107.4L199.2 107.7 M194.3 107.1L196.2 108.0L199.2 107.7L199.2 112.3L199.7 113.2 M192.3 107.4L193.3 109.8L192.3 111.3L192.3 112.5L195.9 114.6L197.4 116.1 M194.3 107.1L192.3 107.4L189.4 108.0 M198.5 121.9L196.1 122.6L193.1 122.8L192.7 121.0L191.2 120.8L189.1 119.6L187.9 117.9L187.7 115.8L189.2 113.9L188.9 112.6L192.3 112.5 M189.4 108.0L188.4 110.0L188.0 112.9L187.7 115.8 M188.0 112.9L188.9 112.6 M187.5 114.1L189.2 113.9 M171.0 117.4L175.2 117.3L175.6 118.9L178.1 118.9L180.5 122.5L182.4 122.3L182.7 123.8L185.8 123.6L187.3 124.7L188.1 123.5L186.7 123.1L187.0 120.7L189.1 119.6 M189.4 108.0L185.8 106.5L181.0 107.5L177.2 108.1L176.4 112.0L174.7 114.2L174.7 116.2L171.7 116.0L170.8 116.4 M177.2 108.1L174.8 109.5 M168.6 109.2L171.9 109.3L174.8 109.5 M170.0 115.3L173.1 113.5L173.2 112.0L171.9 109.3 M168.6 110.5L170.1 110.5L170.1 109.2 M170.5 128.5L172.6 128.7L176.9 128.7L181.7 128.9L180.4 127.5L180.4 124.3L182.4 124.3L182.4 122.3 M179.4 129.6L179.3 133.4L178.3 133.4L178.1 140.1L175.2 139.9L174.7 140.3 M181.7 128.9L183.6 129.2 M179.4 129.6L181.7 128.9 M178.2 136.3L181.1 136.9L183.5 137.3L185.0 135.2L187.4 133.7L185.8 131.9L183.6 129.2L185.2 129.3L188.6 126.9L188.6 126.3L191.1 125.3L191.2 120.8 M187.4 133.7L189.2 133.9L190.9 131.1L191.1 128.2L188.6 126.9 M189.2 133.9L189.8 136.1L189.6 138.5L190.5 138.6 M193.1 122.8L192.6 125.8L193.8 127.4L193.2 128.5L192.9 127.9 M191.1 125.3L192.6 125.8 M185.0 141.4L186.2 140.4L187.0 141.5L185.6 142.5 M188.7 137.6L189.6 138.5L188.7 139.0 M151.7 107.2L151.0 104.1L151.0 101.2 M156.2 106.6L156.4 102.2L153.9 101.4 M160.2 105.5L159.5 103.2L159.0 100.7 M160.7 105.4L160.5 102.7L159.9 100.7 M161.6 105.3L161.7 102.7L162.5 100.0 M153.9 101.4L156.3 102.2L159.0 100.7L161.2 99.7 M297.2 114.1L296.9 120.7 M271.2 110.0L266.8 110.5L266.3 109.6 M271.2 110.0L272.1 107.2L274.2 107.3"/>
</svg>
<div class="card" style="left:677px;top:659px;width:348px;height:331px;"></div>
<div class="t" style="left:699.6px;top:684.0px;font-size:13.5px;color:#202124;letter-spacing:-0.020px;">Event count</div>
<div class="dash" style="left:699.6px;top:698.0px;width:71.1px;color:#747980"></div>
<div class="t" style="left:774.7px;top:684.0px;font-size:13.5px;color:#202124;letter-spacing:0.042px;">by</div>
<div class="t" style="left:793.0px;top:684.0px;font-size:13.5px;color:#202124;letter-spacing:-0.205px;">Event name</div>
<div class="dash" style="left:793.0px;top:698.0px;width:70.2px;color:#747980"></div>
<div class="t" style="left:699.6px;top:725.0px;font-size:10px;color:#5f6368;letter-spacing:1.088px;-webkit-text-stroke:0.3px #5f6368;">EVENT NAME</div>
<div class="dash" style="left:699.6px;top:738.0px;width:74.8px;color:#747980"></div>
<div class="t" style="left:920.8px;top:725.0px;font-size:10px;color:#5f6368;letter-spacing:0.893px;-webkit-text-stroke:0.3px #5f6368;">EVENT COUNT</div>
<div class="dash" style="left:920.6px;top:738.0px;width:80.8px;color:#747980"></div>
<div class="abs" style="left:699.6px;top:743.5px;width:302.4px;height:1px;background:#dadce0"></div>
<div class="t" style="left:802.9px;top:761.0px;font-size:12px;color:#5f6368;letter-spacing:0.223px;">No data available</div>
<div class="card" style="left:1037px;top:659px;width:348px;height:331px;"></div>
<div class="t" style="left:1059.6px;top:684.0px;font-size:13.5px;color:#202124;letter-spacing:-0.353px;">Views</div>
<div class="dash" style="left:1059.6px;top:698.0px;width:34.6px;color:#747980"></div>
<div class="t" style="left:1098.2px;top:684.0px;font-size:13.5px;color:#202124;letter-spacing:0.042px;">by</div>
<div class="t" style="left:1116.5px;top:684.0px;font-size:13.5px;color:#202124;letter-spacing:-0.036px;">Page title and screen class</div>
<div class="dash" style="left:1116.5px;top:698.0px;width:160.4px;color:#747980"></div>
<div class="t" style="left:1059.6px;top:725.0px;font-size:10px;color:#5f6368;letter-spacing:0.704px;-webkit-text-stroke:0.3px #5f6368;">PAGE TITLE AND SCREEN …</div>
<div class="dash" style="left:1059.6px;top:738.0px;width:146.7px;color:#747980"></div>
<div class="t" style="left:1325.4px;top:725.0px;font-size:10px;color:#5f6368;letter-spacing:1.043px;-webkit-text-stroke:0.3px #5f6368;">VIEWS</div>
<div class="dash" style="left:1325.2px;top:738.0px;width:36.6px;color:#747980"></div>
<div class="abs" style="left:1059.6px;top:743.5px;width:302.4px;height:1px;background:#dadce0"></div>
<div class="t" style="left:1162.6px;top:761.0px;font-size:12px;color:#5f6368;letter-spacing:0.223px;">No data available</div>
<div class="abs" style="left:1434px;top:98px;width:278px;height:872px;background:#fff;border-left:1px solid #dcdde0"></div>
<svg style="left:1454px;top:109px" width="20" height="20" viewBox="0 0 20 20">
<path d="M12.8 2.8H3.7A2 2 0 0 0 1.7 4.8V16.55A2 2 0 0 0 3.7 18.55H15A2 2 0 0 0 17 16.55V7" fill="none" stroke="#6e6e6e" stroke-width="1.55"/>
<path d="M5.6 8.4V15.5M9.1 11.3V15.5M12.8 12.4V15.5" stroke="#6e6e6e" stroke-width="1.6" stroke-linecap="round" fill="none"/>
<path d="M10.5 9L15.6 3.9" stroke="#6e6e6e" stroke-width="2.3" stroke-linecap="round" fill="none"/>
<path d="M16.2 2.1L17.3 1.2L18.2 3.3L17.2 3.2Z" fill="#6e6e6e"/>
</svg>
<div class="t" style="left:1493.2px;top:111.0px;font-size:17px;color:#202124;letter-spacing:-0.176px;">Customize report</div>
<div class="abs" style="left:1435.0px;top:141.0px;width:277.0px;height:1px;background:#dadce0"></div>
<div class="t" style="left:1453.2px;top:158.0px;font-size:10px;color:#5f6368;letter-spacing:0.267px;-webkit-text-stroke:0.3px #5f6368;">CARDS (UP TO 16)</div>
<div class="dash" style="left:1453.2px;top:170.0px;width:92.9px;color:#747980"></div>
<div class="abs" style="left:1453px;top:185px;width:252px;height:36px;border:1px solid #dadce0;border-radius:4px;background:#fff"></div>
<svg style="left:1466px;top:196.5px" width="8" height="13" viewBox="0 0 8 13"><circle cx="1.7" cy="1.9" r="1.35" fill="#444746"/><circle cx="1.7" cy="6.5" r="1.35" fill="#444746"/><circle cx="1.7" cy="11.1" r="1.35" fill="#444746"/><circle cx="6.2" cy="1.9" r="1.35" fill="#444746"/><circle cx="6.2" cy="6.5" r="1.35" fill="#444746"/><circle cx="6.2" cy="11.1" r="1.35" fill="#444746"/></svg>
<svg style="left:1680px;top:195.5px" width="15" height="15" viewBox="0 0 15 15"><circle cx="7.5" cy="7.5" r="6.6" fill="none" stroke="#444746" stroke-width="1.35"/><path d="M5.1 5.1L9.9 9.9M9.9 5.1L5.1 9.9" stroke="#444746" stroke-width="1.35"/></svg>
<div class="abs" style="left:1453px;top:228px;width:252px;height:36px;border:1px solid #dadce0;border-radius:4px;background:#fff"></div>
<svg style="left:1466px;top:239.5px" width="8" height="13" viewBox="0 0 8 13"><circle cx="1.7" cy="1.9" r="1.35" fill="#444746"/><circle cx="1.7" cy="6.5" r="1.35" fill="#444746"/><circle cx="1.7" cy="11.1" r="1.35" fill="#444746"/><circle cx="6.2" cy="1.9" r="1.35" fill="#444746"/><circle cx="6.2" cy="6.5" r="1.35" fill="#444746"/><circle cx="6.2" cy="11.1" r="1.35" fill="#444746"/></svg>
<svg style="left:1680px;top:238.5px" width="15" height="15" viewBox="0 0 15 15"><circle cx="7.5" cy="7.5" r="6.6" fill="none" stroke="#444746" stroke-width="1.35"/><path d="M5.1 5.1L9.9 9.9M9.9 5.1L5.1 9.9" stroke="#444746" stroke-width="1.35"/></svg>
<div class="abs" style="left:1453px;top:272px;width:252px;height:35px;border:1px solid #dadce0;border-radius:4px;background:#fff"></div>
<svg style="left:1466px;top:283.0px" width="8" height="13" viewBox="0 0 8 13"><circle cx="1.7" cy="1.9" r="1.35" fill="#444746"/><circle cx="1.7" cy="6.5" r="1.35" fill="#444746"/><circle cx="1.7" cy="11.1" r="1.35" fill="#444746"/><circle cx="6.2" cy="1.9" r="1.35" fill="#444746"/><circle cx="6.2" cy="6.5" r="1.35" fill="#444746"/><circle cx="6.2" cy="11.1" r="1.35" fill="#444746"/></svg>
<svg style="left:1680px;top:282.0px" width="15" height="15" viewBox="0 0 15 15"><circle cx="7.5" cy="7.5" r="6.6" fill="none" stroke="#444746" stroke-width="1.35"/><path d="M5.1 5.1L9.9 9.9M9.9 5.1L5.1 9.9" stroke="#444746" stroke-width="1.35"/></svg>
<div class="abs" style="left:1453px;top:315px;width:252px;height:36px;border:1px solid #dadce0;border-radius:4px;background:#fff"></div>
<svg style="left:1466px;top:326.5px" width="8" height="13" viewBox="0 0 8 13"><circle cx="1.7" cy="1.9" r="1.35" fill="#444746"/><circle cx="1.7" cy="6.5" r="1.35" fill="#444746"/><circle cx="1.7" cy="11.1" r="1.35" fill="#444746"/><circle cx="6.2" cy="1.9" r="1.35" fill="#444746"/><circle cx="6.2" cy="6.5" r="1.35" fill="#444746"/><circle cx="6.2" cy="11.1" r="1.35" fill="#444746"/></svg>
<svg style="left:1680px;top:325.5px" width="15" height="15" viewBox="0 0 15 15"><circle cx="7.5" cy="7.5" r="6.6" fill="none" stroke="#444746" stroke-width="1.35"/><path d="M5.1 5.1L9.9 9.9M9.9 5.1L5.1 9.9" stroke="#444746" stroke-width="1.35"/></svg>
<div class="abs" style="left:1453px;top:358px;width:252px;height:36px;border:1px solid #dadce0;border-radius:4px;background:#fff"></div>
<svg style="left:1466px;top:369.5px" width="8" height="13" viewBox="0 0 8 13"><circle cx="1.7" cy="1.9" r="1.35" fill="#444746"/><circle cx="1.7" cy="6.5" r="1.35" fill="#444746"/><circle cx="1.7" cy="11.1" r="1.35" fill="#444746"/><circle cx="6.2" cy="1.9" r="1.35" fill="#444746"/><circle cx="6.2" cy="6.5" r="1.35" fill="#444746"/><circle cx="6.2" cy="11.1" r="1.35" fill="#444746"/></svg>
<svg style="left:1680px;top:368.5px" width="15" height="15" viewBox="0 0 15 15"><circle cx="7.5" cy="7.5" r="6.6" fill="none" stroke="#444746" stroke-width="1.35"/><path d="M5.1 5.1L9.9 9.9M9.9 5.1L5.1 9.9" stroke="#444746" stroke-width="1.35"/></svg>
<div class="t" style="left:1483.0px;top:197.0px;font-size:13px;color:#3c4043;letter-spacing:0.086px;-webkit-text-stroke:0.3px #3c4043;">Realtime</div>
<div class="t" style="left:1483.0px;top:240.0px;font-size:13px;color:#3c4043;letter-spacing:0.475px;-webkit-text-stroke:0.3px #3c4043;">Overview</div>
<div class="t" style="left:1483.0px;top:283.0px;font-size:13px;color:#3c4043;letter-spacing:0.403px;-webkit-text-stroke:0.3px #3c4043;">User retention by cohort</div>
<div class="t" style="left:1483.0px;top:326.0px;font-size:13px;color:#3c4043;letter-spacing:-0.237px;-webkit-text-stroke:0.3px #3c4043;">Users</div>
<div class="dash" style="left:1483.0px;top:340.0px;width:33.0px;color:#747980"></div>
<div class="t" style="left:1520.5px;top:326.0px;font-size:13px;color:#3c4043;letter-spacing:0.270px;-webkit-text-stroke:0.3px #3c4043;">by</div>
<div class="t" style="left:1538.0px;top:326.0px;font-size:13px;color:#3c4043;letter-spacing:0.580px;-webkit-text-stroke:0.3px #3c4043;">Country</div>
<div class="dash" style="left:1538.0px;top:340.0px;width:49.0px;color:#747980"></div>
<div class="t" style="left:1483.0px;top:369.0px;font-size:13px;color:#3c4043;letter-spacing:0.234px;-webkit-text-stroke:0.3px #3c4043;">Event count</div>
<div class="dash" style="left:1483.0px;top:383.0px;width:71.0px;color:#747980"></div>
<div class="t" style="left:1558.0px;top:369.0px;font-size:13px;color:#3c4043;letter-spacing:0.270px;-webkit-text-stroke:0.3px #3c4043;">by</div>
<div class="t" style="left:1576.0px;top:369.0px;font-size:13px;color:#3c4043;letter-spacing:0.070px;-webkit-text-stroke:0.3px #3c4043;">Event name</div>
<div class="dash" style="left:1576.0px;top:383.0px;width:70.0px;color:#747980"></div>
<div class="abs" style="left:1453px;top:401px;width:252px;height:54px;border:1px solid #dadce0;border-radius:4px;background:#fff"></div>
<svg style="left:1466px;top:421.5px" width="8" height="13" viewBox="0 0 8 13"><circle cx="1.7" cy="1.9" r="1.35" fill="#444746"/><circle cx="1.7" cy="6.5" r="1.35" fill="#444746"/><circle cx="1.7" cy="11.1" r="1.35" fill="#444746"/><circle cx="6.2" cy="1.9" r="1.35" fill="#444746"/><circle cx="6.2" cy="6.5" r="1.35" fill="#444746"/><circle cx="6.2" cy="11.1" r="1.35" fill="#444746"/></svg>
<svg style="left:1680px;top:420.5px" width="15" height="15" viewBox="0 0 15 15"><circle cx="7.5" cy="7.5" r="6.6" fill="none" stroke="#444746" stroke-width="1.35"/><path d="M5.1 5.1L9.9 9.9M9.9 5.1L5.1 9.9" stroke="#444746" stroke-width="1.35"/></svg>
<div class="t" style="left:1483.0px;top:413.0px;font-size:13px;color:#3c4043;letter-spacing:-0.044px;-webkit-text-stroke:0.3px #3c4043;">Views</div>
<div class="dash" style="left:1483.0px;top:428.0px;width:34.5px;color:#747980"></div>
<div class="t" style="left:1521.5px;top:413.0px;font-size:13px;color:#3c4043;letter-spacing:0.270px;-webkit-text-stroke:0.3px #3c4043;">by</div>
<div class="t" style="left:1483.0px;top:431.0px;font-size:13px;color:#3c4043;letter-spacing:0.117px;-webkit-text-stroke:0.3px #3c4043;">Page title and screen cl...</div>
<div class="dash" style="left:1483.0px;top:445.0px;width:140.0px;color:#747980"></div>
<div class="abs" style="left:1453px;top:462px;width:252px;height:36px;border:1px solid #dadce0;border-radius:4px;background:#fff"></div>
<svg style="left:1466px;top:473.5px" width="8" height="13" viewBox="0 0 8 13"><circle cx="1.7" cy="1.9" r="1.35" fill="#444746"/><circle cx="1.7" cy="6.5" r="1.35" fill="#444746"/><circle cx="1.7" cy="11.1" r="1.35" fill="#444746"/><circle cx="6.2" cy="1.9" r="1.35" fill="#444746"/><circle cx="6.2" cy="6.5" r="1.35" fill="#444746"/><circle cx="6.2" cy="11.1" r="1.35" fill="#444746"/></svg>
<svg style="left:1680px;top:472.5px" width="15" height="15" viewBox="0 0 15 15"><circle cx="7.5" cy="7.5" r="6.6" fill="none" stroke="#444746" stroke-width="1.35"/><path d="M5.1 5.1L9.9 9.9M9.9 5.1L5.1 9.9" stroke="#444746" stroke-width="1.35"/></svg>
<div class="t" style="left:1483.0px;top:474.0px;font-size:13px;color:#3c4043;letter-spacing:0.234px;-webkit-text-stroke:0.3px #3c4043;">Event count</div>
<div class="dash" style="left:1483.0px;top:488.0px;width:71.0px;color:#747980"></div>
<div class="t" style="left:1558.0px;top:474.0px;font-size:13px;color:#3c4043;letter-spacing:0.270px;-webkit-text-stroke:0.3px #3c4043;">by</div>
<div class="t" style="left:1576.0px;top:474.0px;font-size:13px;color:#3c4043;letter-spacing:-0.020px;-webkit-text-stroke:0.3px #3c4043;">Level</div>
<div class="dash" style="left:1576.0px;top:488.0px;width:31.0px;color:#747980"></div>
<div class="abs" style="left:1453px;top:506px;width:252px;height:36px;border:1px solid #dadce0;border-radius:4px;background:#fff"></div>
<svg style="left:1466px;top:517.5px" width="8" height="13" viewBox="0 0 8 13"><circle cx="1.7" cy="1.9" r="1.35" fill="#444746"/><circle cx="1.7" cy="6.5" r="1.35" fill="#444746"/><circle cx="1.7" cy="11.1" r="1.35" fill="#444746"/><circle cx="6.2" cy="1.9" r="1.35" fill="#444746"/><circle cx="6.2" cy="6.5" r="1.35" fill="#444746"/><circle cx="6.2" cy="11.1" r="1.35" fill="#444746"/></svg>
<svg style="left:1680px;top:516.5px" width="15" height="15" viewBox="0 0 15 15"><circle cx="7.5" cy="7.5" r="6.6" fill="none" stroke="#444746" stroke-width="1.35"/><path d="M5.1 5.1L9.9 9.9M9.9 5.1L5.1 9.9" stroke="#444746" stroke-width="1.35"/></svg>
<div class="t" style="left:1483.0px;top:517.0px;font-size:13px;color:#3c4043;letter-spacing:0.234px;-webkit-text-stroke:0.3px #3c4043;">Event count</div>
<div class="dash" style="left:1483.0px;top:531.0px;width:71.0px;color:#747980"></div>
<div class="t" style="left:1558.0px;top:517.0px;font-size:13px;color:#3c4043;letter-spacing:0.270px;-webkit-text-stroke:0.3px #3c4043;">by</div>
<div class="t" style="left:1576.0px;top:517.0px;font-size:13px;color:#3c4043;letter-spacing:0.053px;-webkit-text-stroke:0.3px #3c4043;">Topic</div>
<div class="dash" style="left:1576.0px;top:531.0px;width:32.0px;color:#747980"></div>
<div class="abs" style="left:1453px;top:549px;width:252px;height:36px;border:1px solid #dadce0;border-radius:4px;background:#fff"></div>
<svg style="left:1466px;top:560.5px" width="8" height="13" viewBox="0 0 8 13"><circle cx="1.7" cy="1.9" r="1.35" fill="#444746"/><circle cx="1.7" cy="6.5" r="1.35" fill="#444746"/><circle cx="1.7" cy="11.1" r="1.35" fill="#444746"/><circle cx="6.2" cy="1.9" r="1.35" fill="#444746"/><circle cx="6.2" cy="6.5" r="1.35" fill="#444746"/><circle cx="6.2" cy="11.1" r="1.35" fill="#444746"/></svg>
<svg style="left:1680px;top:559.5px" width="15" height="15" viewBox="0 0 15 15"><circle cx="7.5" cy="7.5" r="6.6" fill="none" stroke="#444746" stroke-width="1.35"/><path d="M5.1 5.1L9.9 9.9M9.9 5.1L5.1 9.9" stroke="#444746" stroke-width="1.35"/></svg>
<div class="t" style="left:1483.0px;top:560.0px;font-size:13px;color:#3c4043;letter-spacing:-0.237px;-webkit-text-stroke:0.3px #3c4043;">Users</div>
<div class="dash" style="left:1483.0px;top:574.0px;width:33.0px;color:#747980"></div>
<div class="t" style="left:1520.0px;top:560.0px;font-size:13px;color:#3c4043;letter-spacing:0.270px;-webkit-text-stroke:0.3px #3c4043;">by</div>
<div class="t" style="left:1538.0px;top:560.0px;font-size:13px;color:#3c4043;letter-spacing:0.449px;-webkit-text-stroke:0.3px #3c4043;">Device category</div>
<div class="dash" style="left:1538.0px;top:574.0px;width:99.5px;color:#747980"></div>
<div class="abs" style="left:1453px;top:592px;width:252px;height:36px;border:1px dashed #dadce0;border-radius:4px;background:#fff"></div>
<svg style="left:1464px;top:604px" width="12" height="12" viewBox="0 0 12 12"><path d="M6 0V12M0 6H12" stroke="#444746" stroke-width="1.3"/></svg>
<div class="t" style="left:1483.2px;top:603.0px;font-size:13px;color:#444746;letter-spacing:0.073px;-webkit-text-stroke:0.15px #444746;">Add Cards</div>
<div class="abs" style="left:1435.0px;top:639.0px;width:277.0px;height:1px;background:#dadce0"></div>
<div class="t" style="left:1453.2px;top:652.0px;font-size:10px;color:#5f6368;letter-spacing:0.076px;-webkit-text-stroke:0.3px #5f6368;">REPORT TEMPLATE</div>
<div class="dash" style="left:1453.2px;top:664.0px;width:98.3px;color:#747980"></div>
<div class="t" style="left:1453.5px;top:682.0px;font-size:13px;color:#202124;letter-spacing:0.254px;-webkit-text-stroke:0.3px #202124;">Reports snapshot</div>
<div class="abs" style="left:1672.3px;top:671.9px;width:32.6px;height:32.6px;border:1.2px solid #dadce0;border-radius:50%;background:#fff"></div>
<svg style="left:1680.4px;top:679.9px" width="16.5" height="16.5" viewBox="0 0 16.5 16.5" fill="none" stroke="#3c4043" stroke-width="1.8" stroke-linecap="butt">
<path d="M6.9 2.5A3.2 3.2 0 1 0 2.4 6.9"/><path d="M10.1 14.5A3.2 3.2 0 1 0 14.4 10.1"/><path d="M6.1 6.3L10.2 10.2"/><path d="M9.1 2.9H12.8A1.2 1.2 0 0 1 14 4.1V7.3"/><path d="M2.8 9.5V11.6A2.2 2.2 0 0 0 5 13.8H7.4"/>
</svg>
<div class="abs" style="left:1435.0px;top:715.3px;width:277.0px;height:1px;background:#dadce0"></div>
<div class="abs" style="left:1429.2px;top:98px;width:5.5px;height:550px;background:#d3d5d9;border-radius:3px 0 0 0"></div>
<div class="abs" style="left:0;top:969px;width:1712px;height:2px;background:#eaf3f6"></div>
</div>
</body>
</html>
